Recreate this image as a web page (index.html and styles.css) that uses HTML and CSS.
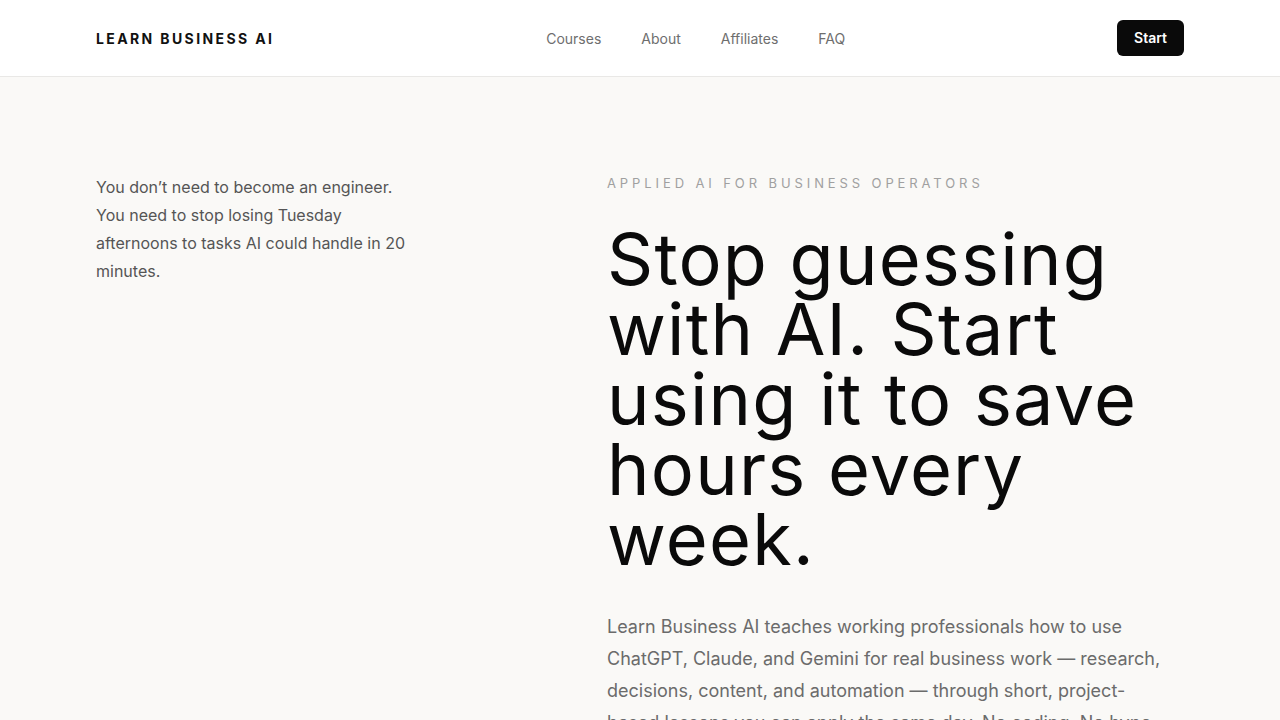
FILE: index.html
```html
<!DOCTYPE html>
<html lang="en">
<head>
    <meta charset="UTF-8">
    <meta name="viewport" content="width=device-width, initial-scale=1.0">
    <title>Learn Business AI</title>
    <link rel="stylesheet" href="styles.css">
</head>
<body>
    <header class="top">
        <div class="wrap top-row">
            <a class="logo" href="#">LEARN BUSINESS AI</a>
            <nav class="menu">
                <a href="#">Courses</a>
                <a href="#">About</a>
                <a href="#">Affiliates</a>
                <a href="#">FAQ</a>
            </nav>
            <a class="btn" href="#">Start</a>
        </div>
    </header>

    <main class="hero">
        <div class="wrap hero-grid">
            <p class="aside">You don’t need to become an engineer. You need to stop losing Tuesday afternoons to tasks AI could handle in 20 minutes.</p>
            <div class="main-col">
                <p class="eyebrow">APPLIED AI FOR BUSINESS OPERATORS</p>
                <h1>Stop guessing with AI. Start using it to save hours every week.</h1>
                <p class="lead">Learn Business AI teaches working professionals how to use ChatGPT, Claude, and Gemini for real business work — research, decisions, content, and automation — through short, project-based lessons you can apply the same day. No coding. No hype.</p>
            </div>
        </div>
    </main>
</body>
</html>
```

FILE: styles.css
```css
*{box-sizing:border-box;}
body{margin:0; background:#faf9f7; color:#0a0a0a; font-family:Inter, "Liberation Sans", sans-serif;}
a{text-decoration:none; color:inherit;}
.wrap{width:1088px; margin:0 auto;}

.top{background:#fff; border-bottom:1px solid #e9e8e6; height:77px;}
.top-row{height:76px; display:flex; align-items:center; justify-content:space-between;}
.logo{font-size:14px; font-weight:700; letter-spacing:0.17em; color:#111;}
.menu{display:flex; gap:40px; font-size:14px; color:#6e6e6e;}
.btn{background:#0a0a0a; color:#fff; font-size:14px; font-weight:600; height:36px; line-height:36px; padding:0 17px; border-radius:6px;}

.hero{padding-top:96px;}
.hero-grid{display:grid; grid-template-columns:1fr 577px; gap:64px;}
.aside{margin:0; max-width:320px; font-size:16px; line-height:28px; color:#555;}
.eyebrow{margin:2px 0 33px; font-size:13px; letter-spacing:0.3em; color:#a0a0a0;}
h1{margin:0 0 37px; font-size:72px; line-height:70px; font-weight:400; letter-spacing:1.2px;}
.lead{margin:0; max-width:560px; font-size:18px; line-height:32px; color:#6b6b6b;}
```
